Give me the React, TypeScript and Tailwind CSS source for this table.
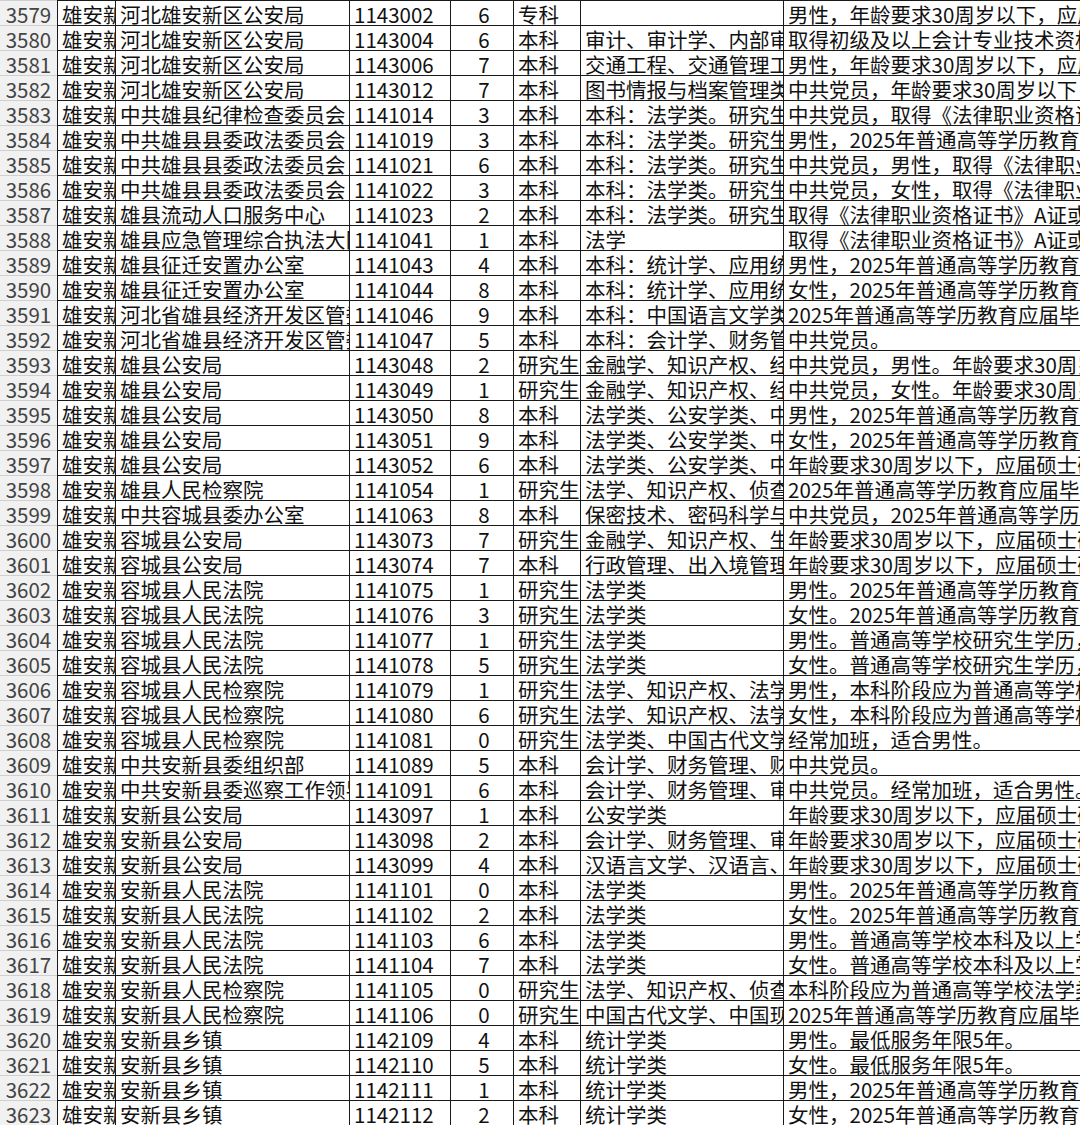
type Row = [number, string, string, number, string, string, string];

const rows: Row[] = [
  [3579, "河北雄安新区公安局", "1143002", 6, "专科", "", "男性，年龄要求30周岁以下，应届毕业生"],
  [3580, "河北雄安新区公安局", "1143004", 6, "本科", "审计、审计学、内部审计", "取得初级及以上会计专业技术资格证书"],
  [3581, "河北雄安新区公安局", "1143006", 7, "本科", "交通工程、交通管理工程", "男性，年龄要求30周岁以下，应届毕业生"],
  [3582, "河北雄安新区公安局", "1143012", 7, "本科", "图书情报与档案管理类", "中共党员，年龄要求30周岁以下，应届"],
  [3583, "中共雄县纪律检查委员会", "1141014", 3, "本科", "本科：法学类。研究生：法学", "中共党员，取得《法律职业资格证书》"],
  [3584, "中共雄县县委政法委员会", "1141019", 3, "本科", "本科：法学类。研究生：法学", "男性，2025年普通高等学历教育应届"],
  [3585, "中共雄县县委政法委员会", "1141021", 6, "本科", "本科：法学类。研究生：法学", "中共党员，男性，取得《法律职业资格"],
  [3586, "中共雄县县委政法委员会", "1141022", 3, "本科", "本科：法学类。研究生：法学", "中共党员，女性，取得《法律职业资格"],
  [3587, "雄县流动人口服务中心", "1141023", 2, "本科", "本科：法学类。研究生：法学", "取得《法律职业资格证书》A证或B证"],
  [3588, "雄县应急管理综合执法大队", "1141041", 1, "本科", "法学", "取得《法律职业资格证书》A证或B证"],
  [3589, "雄县征迁安置办公室", "1141043", 4, "本科", "本科：统计学、应用统计学", "男性，2025年普通高等学历教育应届"],
  [3590, "雄县征迁安置办公室", "1141044", 8, "本科", "本科：统计学、应用统计学", "女性，2025年普通高等学历教育应届"],
  [3591, "河北省雄县经济开发区管委会", "1141046", 9, "本科", "本科：中国语言文学类", "2025年普通高等学历教育应届毕业生"],
  [3592, "河北省雄县经济开发区管委会", "1141047", 5, "本科", "本科：会计学、财务管理", "中共党员。"],
  [3593, "雄县公安局", "1143048", 2, "研究生", "金融学、知识产权、经济学", "中共党员，男性。年龄要求30周岁以下"],
  [3594, "雄县公安局", "1143049", 1, "研究生", "金融学、知识产权、经济学", "中共党员，女性。年龄要求30周岁以下"],
  [3595, "雄县公安局", "1143050", 8, "本科", "法学类、公安学类、中国语言", "男性，2025年普通高等学历教育应届"],
  [3596, "雄县公安局", "1143051", 9, "本科", "法学类、公安学类、中国语言", "女性，2025年普通高等学历教育应届"],
  [3597, "雄县公安局", "1143052", 6, "本科", "法学类、公安学类、中国语言", "年龄要求30周岁以下，应届硕士研究生"],
  [3598, "雄县人民检察院", "1141054", 1, "研究生", "法学、知识产权、侦查学", "2025年普通高等学历教育应届毕业生"],
  [3599, "中共容城县委办公室", "1141063", 8, "本科", "保密技术、密码科学与技术", "中共党员，2025年普通高等学历教育"],
  [3600, "容城县公安局", "1143073", 7, "研究生", "金融学、知识产权、生物学", "年龄要求30周岁以下，应届硕士研究生"],
  [3601, "容城县公安局", "1143074", 7, "本科", "行政管理、出入境管理", "年龄要求30周岁以下，应届硕士研究生"],
  [3602, "容城县人民法院", "1141075", 1, "研究生", "法学类", "男性。2025年普通高等学历教育应届"],
  [3603, "容城县人民法院", "1141076", 3, "研究生", "法学类", "女性。2025年普通高等学历教育应届"],
  [3604, "容城县人民法院", "1141077", 1, "研究生", "法学类", "男性。普通高等学校研究生学历，"],
  [3605, "容城县人民法院", "1141078", 5, "研究生", "法学类", "女性。普通高等学校研究生学历，"],
  [3606, "容城县人民检察院", "1141079", 1, "研究生", "法学、知识产权、法学理论", "男性，本科阶段应为普通高等学校"],
  [3607, "容城县人民检察院", "1141080", 6, "研究生", "法学、知识产权、法学理论", "女性，本科阶段应为普通高等学校"],
  [3608, "容城县人民检察院", "1141081", 0, "研究生", "法学类、中国古代文学", "经常加班，适合男性。"],
  [3609, "中共安新县委组织部", "1141089", 5, "本科", "会计学、财务管理、财务会计", "中共党员。"],
  [3610, "中共安新县委巡察工作领导小组", "1141091", 6, "本科", "会计学、财务管理、审计学", "中共党员。经常加班，适合男性。"],
  [3611, "安新县公安局", "1143097", 1, "本科", "公安学类", "年龄要求30周岁以下，应届硕士研究生"],
  [3612, "安新县公安局", "1143098", 2, "本科", "会计学、财务管理、审计学", "年龄要求30周岁以下，应届硕士研究生"],
  [3613, "安新县公安局", "1143099", 4, "本科", "汉语言文学、汉语言、", "年龄要求30周岁以下，应届硕士研究生"],
  [3614, "安新县人民法院", "1141101", 0, "本科", "法学类", "男性。2025年普通高等学历教育应届"],
  [3615, "安新县人民法院", "1141102", 2, "本科", "法学类", "女性。2025年普通高等学历教育应届"],
  [3616, "安新县人民法院", "1141103", 6, "本科", "法学类", "男性。普通高等学校本科及以上学历"],
  [3617, "安新县人民法院", "1141104", 7, "本科", "法学类", "女性。普通高等学校本科及以上学历"],
  [3618, "安新县人民检察院", "1141105", 0, "研究生", "法学、知识产权、侦查学", "本科阶段应为普通高等学校法学类专业"],
  [3619, "安新县人民检察院", "1141106", 0, "研究生", "中国古代文学、中国现代文学", "2025年普通高等学历教育应届毕业生"],
  [3620, "安新县乡镇", "1142109", 4, "本科", "统计学类", "男性。最低服务年限5年。"],
  [3621, "安新县乡镇", "1142110", 5, "本科", "统计学类", "女性。最低服务年限5年。"],
  [3622, "安新县乡镇", "1142111", 1, "本科", "统计学类", "男性，2025年普通高等学历教育应届"],
  [3623, "安新县乡镇", "1142112", 2, "本科", "统计学类", "女性，2025年普通高等学历教育应届"],
];

const cell = "flex items-center pt-[2px] overflow-hidden whitespace-nowrap border-l border-[#1a1a1a] pl-[4px]";

export default function App() {
  return (
    <div
      className="w-[1080px] h-[1130px] overflow-hidden bg-white text-[20.5px] leading-none text-[#111]"
      style={{ fontFamily: '"Noto Sans CJK SC", "Noto Sans", sans-serif' }}
    >
      {rows.map((r) => (
        <div key={r[0]} className="flex h-[25px] border-t border-[#1a1a1a]">
          <div className="w-[57px] shrink-0 flex items-center justify-center pt-[2px] bg-[#f1f1f1] text-[#444] border-t border-[#cfcfcf] -mt-px">
            {r[0]}
          </div>
          <div className={`w-[58px] shrink-0 ${cell}`}>雄安新区</div>
          <div className={`w-[234px] shrink-0 ${cell}`}>{r[1]}</div>
          <div className={`w-[101px] shrink-0 ${cell} pl-[3px]`}>{r[2]}</div>
          <div className={`w-[63px] shrink-0 ${cell} justify-center pl-0`}>{r[3]}</div>
          <div className={`w-[67px] shrink-0 ${cell} pl-[3px]`}>{r[4]}</div>
          <div className={`w-[203px] shrink-0 ${cell} pl-[3px]`}>{r[5]}</div>
          <div className={`flex-1 ${cell}`}>{r[6]}</div>
        </div>
      ))}
    </div>
  );
}
